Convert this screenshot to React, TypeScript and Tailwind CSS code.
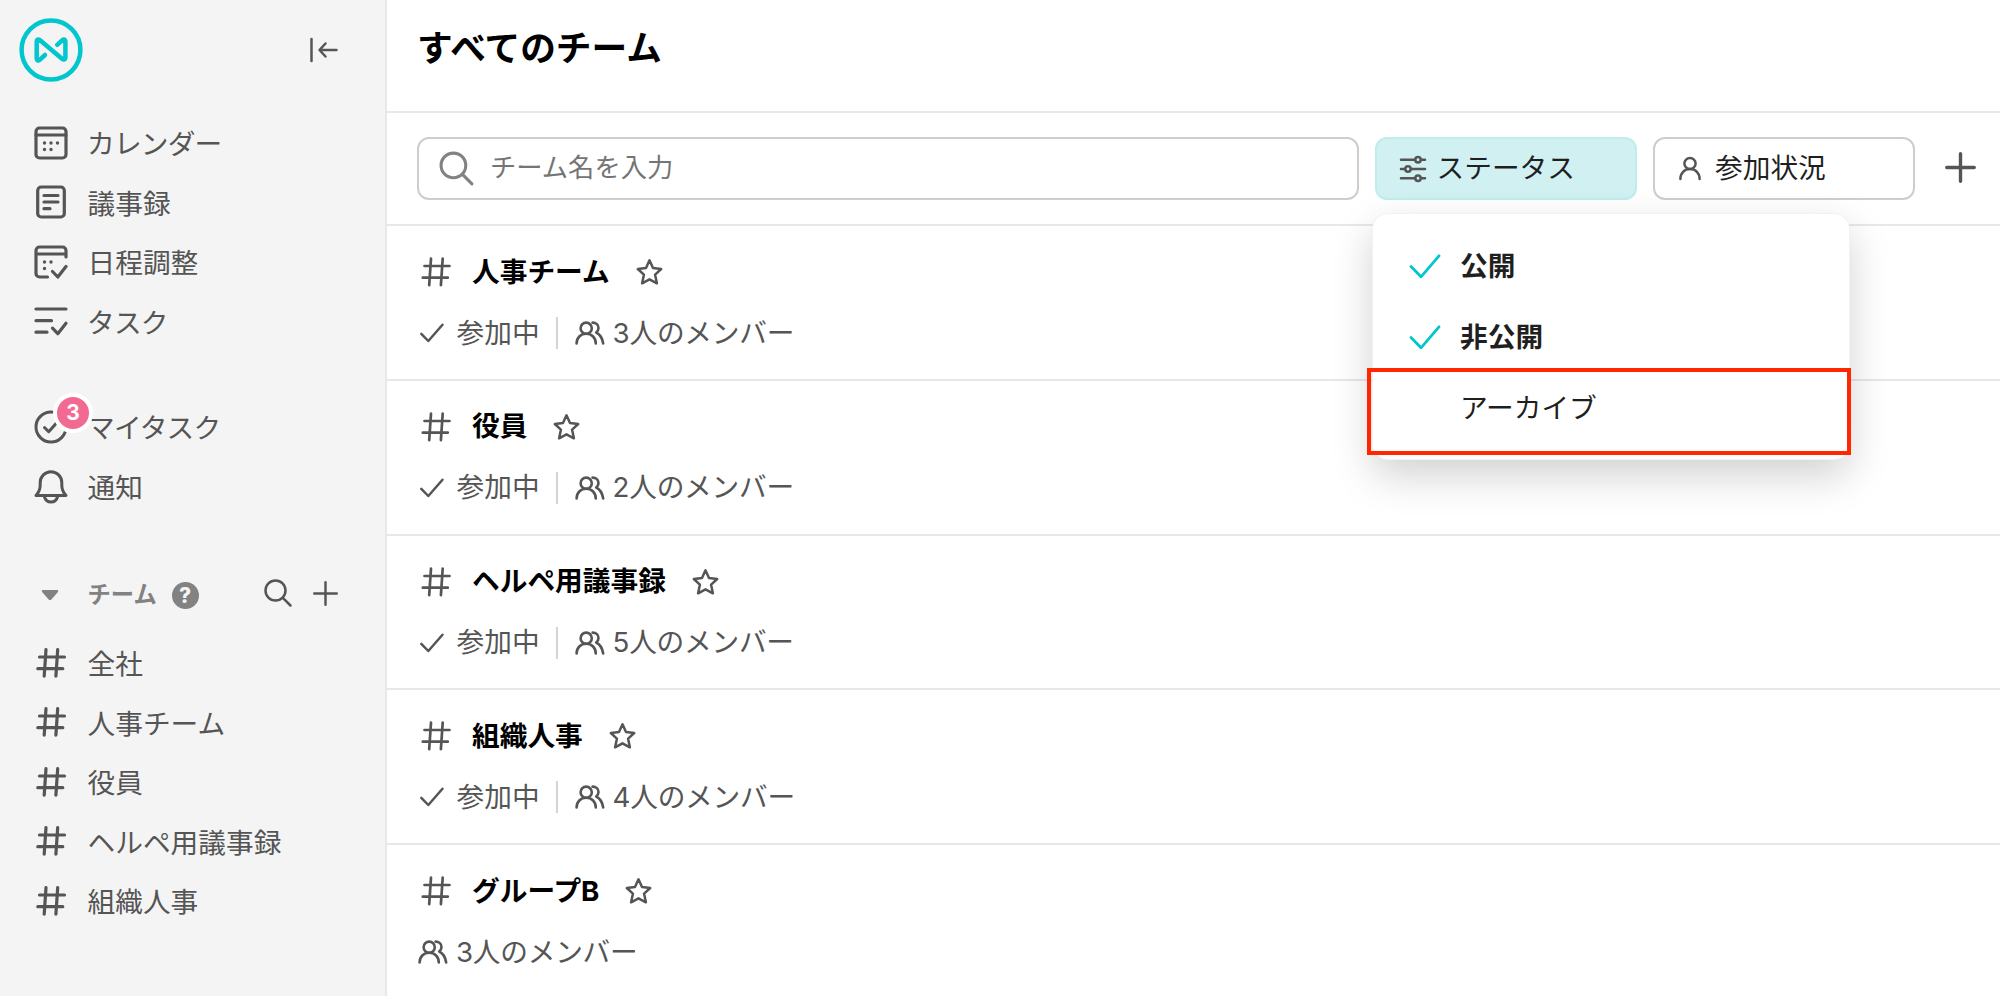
import type { ReactNode, SVGProps } from "react";

type IconProps = SVGProps<SVGSVGElement>;

function Icon({ children, strokeWidth = 3.2, ...props }: IconProps & { children: ReactNode }) {
  return (
    <svg
      width="36"
      height="36"
      viewBox="0 0 36 36"
      fill="none"
      stroke="currentColor"
      strokeWidth={strokeWidth}
      strokeLinecap="round"
      strokeLinejoin="round"
      className="shrink-0"
      {...props}
    >
      {children}
    </svg>
  );
}

function LogoIcon() {
  return (
    <svg width="64" height="64" viewBox="0 0 64 64" fill="none" stroke="#02c6ce" strokeLinecap="round" strokeLinejoin="round">
      <circle cx="32" cy="32" r="29.4" strokeWidth="4.500" />
      <path
        d="M26 37l-5.300 4.900c-1.500 1.300-3 .6-3-1.300V23.500c0-1.900 1.600-2.600 3.100-1.400l22.500 18.800c1.500 1.200 3.100.5 3.100-1.400V23.400c0-1.900-1.500-2.500-3-1.300L38.200 26.800"
        strokeWidth="4.500"
      />
    </svg>
  );
}

function CalendarIcon() {
  return (
    <Icon>
      <rect x="3" y="3" width="30" height="30" rx="3.500" />
      <path d="M3 10h30" />
      <path d="M11.500 18h.01M18 18h.01M24.500 18h.01M11.500 24.500h.01M18 24.500h.01" strokeWidth="3.400" />
    </Icon>
  );
}

function NoteIcon() {
  return (
    <Icon>
      <rect x="4.700" y="3" width="26.600" height="30" rx="3.500" />
      <path d="M11 11.500h14M11 18h14M11 24.700h6" />
    </Icon>
  );
}

function ScheduleIcon() {
  return (
    <Icon>
      <path d="M14.500 33H6.500A3.500 3.500 0 0 1 3 29.500v-23A3.500 3.500 0 0 1 6.500 3h23A3.500 3.500 0 0 1 33 6.500V13M3 10h30M19.500 27.500l5.300 5.500L33 22.500" />
      <path d="M11.500 18h.01M18 18h.01M11.500 24.500h.01" strokeWidth="3.400" />
    </Icon>
  );
}

function TaskIcon() {
  return (
    <Icon>
      <path d="M3 6h30M3 17.700h15.500M3 29.200h11M19.500 25.200l5.300 5.500L33 20.300" />
    </Icon>
  );
}

function MyTaskIcon() {
  return (
    <Icon strokeWidth={3}>
      <circle cx="18" cy="18" r="15" />
      <path d="M11.500 18.500l4.200 4.200 8-9" />
    </Icon>
  );
}

function BellIcon() {
  return (
    <Icon strokeWidth={3}>
      <path d="M3 27.500c2.800-3 4.200-6 4.200-10.500V14.500a10.800 10.800 0 0 1 21.600 0V17c0 4.500 1.400 7.500 4.200 10.500z" />
      <path d="M11.500 29c1 3.300 3.300 5 6.500 5s5.500-1.700 6.500-5" />
    </Icon>
  );
}

function HashIcon({ strokeWidth = 3.2 }: { strokeWidth?: number }) {
  return (
    <Icon strokeWidth={strokeWidth}>
      <path d="M13 4.600L11.200 31.200M24.700 4.600L22.900 31.200M6.500 12h25M4.800 23.700h25" />
    </Icon>
  );
}

function SearchIcon({ size = 36, strokeWidth = 2.8 }: { size?: number; strokeWidth?: number }) {
  return (
    <Icon width={size} height={size} strokeWidth={strokeWidth}>
      <circle cx="15" cy="15" r="12" />
      <path d="M23.800 23.800l9.200 9.200" />
    </Icon>
  );
}

function PlusIcon({ size, strokeWidth }: { size: number; strokeWidth: number }) {
  return (
    <Icon width={size} height={size} strokeWidth={strokeWidth}>
      <path d="M18 3v30M3 18h30" />
    </Icon>
  );
}

function CheckIcon() {
  return (
    <Icon width="28" height="28" viewBox="0 0 28 28" strokeWidth={2.500}>
      <path d="M4.300 14.800l7 7.200L25.500 5.700" />
    </Icon>
  );
}

function StarIcon() {
  return (
    <Icon width="30" height="30" viewBox="0 0 30 30" strokeWidth={2.500}>
      <path d="M14.500 3.300l3.500 7.700 8.200 1-6.100 5.700 1.800 8.600-7.400-4-7.400 4 1.800-8.600L2.800 12l8.200-1z" />
    </Icon>
  );
}

function MembersIcon() {
  return (
    <Icon width="32" height="28" viewBox="0 0 32 28" strokeWidth={2.600}>
      <circle cx="12.200" cy="9.200" r="5.600" />
      <path d="M2.600 24.500c0-5.800 4-9.700 9.600-9.700s9.600 3.900 9.600 9.700M18.600 3.600c3.600 0 5.900 2.200 5.900 5.400 0 2-.8 3.400-2.300 4.500 4 1.900 6.200 5.800 7 11" />
    </Icon>
  );
}

function PersonIcon() {
  return (
    <Icon width="28" height="28" viewBox="0 0 28 28" strokeWidth={2.500}>
      <circle cx="14" cy="8.500" r="5.600" />
      <path d="M4.400 24c0-6 4-9.900 9.600-9.900s9.600 3.900 9.600 9.900" />
    </Icon>
  );
}

function SlidersIcon() {
  return (
    <Icon width="28" height="28" viewBox="0 0 28 28" strokeWidth={2.500}>
      <path d="M2 4.700h14M22 4.700h4M2 14h4M12 14h14M2 23.300h14M22 23.300h4" />
      <circle cx="19" cy="4.700" r="2.700" />
      <circle cx="9" cy="14" r="2.700" />
      <circle cx="19" cy="23.300" r="2.700" />
    </Icon>
  );
}

const mainNav = [
  { label: "カレンダー", icon: <CalendarIcon />, tight: true },
  { label: "議事録", icon: <NoteIcon /> },
  { label: "日程調整", icon: <ScheduleIcon /> },
  { label: "タスク", icon: <TaskIcon />, tight: true },
];

const personalNav = [
  { label: "マイタスク", icon: <MyTaskIcon />, count: 3, tight: true },
  { label: "通知", icon: <BellIcon /> },
];

const sidebarTeams = ["全社", "人事チーム", "役員", "ヘルペ用議事録", "組織人事"];

const teams = [
  { name: "人事チーム", members: 3, joined: true },
  { name: "役員", members: 2, joined: true },
  { name: "ヘルペ用議事録", members: 5, joined: true },
  { name: "組織人事", members: 4, joined: true },
  { name: "グループB", members: 3, joined: false },
];

const statusOptions = [
  { label: "公開", checked: true },
  { label: "非公開", checked: true },
  { label: "アーカイブ", checked: false },
];

type NavItemProps = { label: string; icon: ReactNode; count?: number; tight?: boolean };

function NavItem({ label, icon, count, tight }: NavItemProps) {
  return (
    <a className="flex h-[59.500px] items-center pl-[33px]">
      <span className="relative">
        {icon}
        {count ? (
          <span className="absolute -top-[16px] left-[20px] flex size-[40px] items-center justify-center rounded-full border-4 border-white bg-[#f26a91] font-[Inter] text-[21px] font-bold text-white">
            {count}
          </span>
        ) : null}
      </span>
      <span className={tight ? "pt-[5px] pl-[18px] tracking-[-0.800px]" : "pt-[5px] pl-[18.500px]"}>{label}</span>
    </a>
  );
}

function Sidebar() {
  return (
    <aside className="flex w-[387px] shrink-0 flex-col border-r-2 border-[#e8e8e8] bg-[#f4f4f4] text-[#555]">
      <div className="flex h-[99px] items-center justify-between pr-[47px] pl-[19px]">
        <LogoIcon />
        <Icon width="30" height="28" viewBox="0 0 30 28" strokeWidth={2.500}>
          <path d="M3.500 3v22M28.500 14H12M17.500 7.500L11.500 14l6 6.500" />
        </Icon>
      </div>
      <nav className="pt-[14px]">
        {mainNav.map((item) => (
          <NavItem key={item.label} {...item} />
        ))}
      </nav>
      <nav className="pt-[46px]">
        {personalNav.map((item) => (
          <NavItem key={item.label} {...item} />
        ))}
      </nav>
      <div className="mt-[48px] flex h-[60px] items-center pr-[46px] pl-[41px] text-[#828282]">
        <svg width="18" height="12" viewBox="0 0 18 12" fill="currentColor" className="mt-[2px]">
          <path d="M2 1h14c1.200 0 1.600 1 .9 1.900l-6.500 7.500c-.8.900-2 .9-2.800 0L1.100 2.900C.4 2 .8 1 2 1z" />
        </svg>
        <span className="pt-[2px] pl-[28.500px] text-[23.300px] font-bold">チーム</span>
        <span className="mt-[2px] ml-[15px] flex size-[27px] items-center justify-center rounded-full bg-[#828282] font-[Inter] text-[21px] font-extrabold text-[#f4f4f4]">
          ?
        </span>
        <span className="ml-auto flex items-center gap-[19px] pb-[2px] text-[#555]">
          <SearchIcon size={30} strokeWidth={3} />
          <PlusIcon size={27} strokeWidth={3.300} />
        </span>
      </div>
      <nav className="pt-[9px]">
        {sidebarTeams.map((name) => (
          <NavItem key={name} label={name} icon={<HashIcon />} />
        ))}
      </nav>
    </aside>
  );
}

function StatusMenu() {
  return (
    <div className="absolute top-[76px] -left-[3px] z-10 h-[247px] w-[478px] rounded-[16px] border border-black/5 bg-white pt-[16px] shadow-[0_16px_40px_rgba(0,0,0,0.18)]">
      {statusOptions.map((option) => (
        <div key={option.label} className="flex h-[71px] items-center pl-[34px] text-[#1f1f1f]">
          <span className="w-[53px] text-[#02c6ce]">
            {option.checked ? (
              <Icon strokeWidth={2.800}>
                <path d="M4 18.500l10 10.300L32 7.800" />
              </Icon>
            ) : null}
          </span>
          <span className={option.checked ? "pt-[2px] font-bold" : "pt-[3px]"}>{option.label}</span>
        </div>
      ))}
      <div className="absolute top-[154px] -left-[6px] h-[87px] w-[484px] border-4 border-[#ff2600]" />
    </div>
  );
}

function Toolbar() {
  return (
    <div className="flex h-[113px] items-center gap-[16px] border-b-2 border-[#e8e8e8] pl-[30px]">
      <label className="flex h-[63px] w-[942px] items-center rounded-[12px] border-2 border-[#cdcdcd] pl-[19px] text-[#828282]">
        <SearchIcon size={37} strokeWidth={3} />
        <span className="pl-[15px] text-[26.300px] text-[#757575]">チーム名を入力</span>
      </label>
      <div className="relative">
        <button
          type="button"
          className="flex h-[63px] w-[262px] items-center rounded-[12px] border-2 border-[#c0ecee] bg-[#d0f0f1] pl-[22px] text-[#1f1f1f]"
        >
          <span className="text-[#555]">
            <SlidersIcon />
          </span>
          <span className="pl-[9.500px]">ステータス</span>
        </button>
        <StatusMenu />
      </div>
      <button
        type="button"
        className="flex h-[63px] w-[262px] items-center rounded-[12px] border-2 border-[#cdcdcd] pl-[21px] text-[#1f1f1f]"
      >
        <span className="text-[#555]">
          <PersonIcon />
        </span>
        <span className="pl-[11px]">参加状況</span>
      </button>
      <span className="pb-[3px] pl-[12.500px] text-[#555]">
        <PlusIcon size={33} strokeWidth={3.700} />
      </span>
    </div>
  );
}

function TeamRow({ name, members, joined }: { name: string; members: number; joined: boolean }) {
  return (
    <li className="h-[154.750px] border-b-2 border-[#e8e8e8] pt-[24px] pl-[30px] text-[#555]">
      <div className="flex h-[44px] items-center pl-[1px]">
        <HashIcon strokeWidth={2.700} />
        <span className="pt-[1px] pl-[18px] font-bold text-black">{name}</span>
        <span className="pl-[25px]">
          <StarIcon />
        </span>
      </div>
      <div className="mt-[17px] flex h-[44px] items-center">
        {joined ? (
          <>
            <CheckIcon />
            <span className="pt-[1px] pl-[11.500px]">参加中</span>
            <span className="mr-[15.500px] ml-[16.500px] h-[32px] w-[2px] bg-[#d4d4d4]" />
          </>
        ) : null}
        <MembersIcon />
        <span className="pt-[1px] pl-[7px] tracking-[-0.250px]">{members}人のメンバー</span>
      </div>
    </li>
  );
}

export default function App() {
  return (
    <div className="flex h-[996px] w-[2000px] overflow-hidden bg-white font-['Inter','Noto_Sans_CJK_JP',sans-serif] text-[27.700px] leading-none">
      <Sidebar />
      <main className="min-w-0 flex-1">
        <header className="flex h-[113px] items-center border-b-2 border-[#e8e8e8] pb-[14px] pl-[30px]">
          <h1 className="text-[35.700px] font-bold text-black">すべてのチーム</h1>
        </header>
        <Toolbar />
        <ul>
          {teams.map((team) => (
            <TeamRow key={team.name} {...team} />
          ))}
        </ul>
      </main>
    </div>
  );
}
